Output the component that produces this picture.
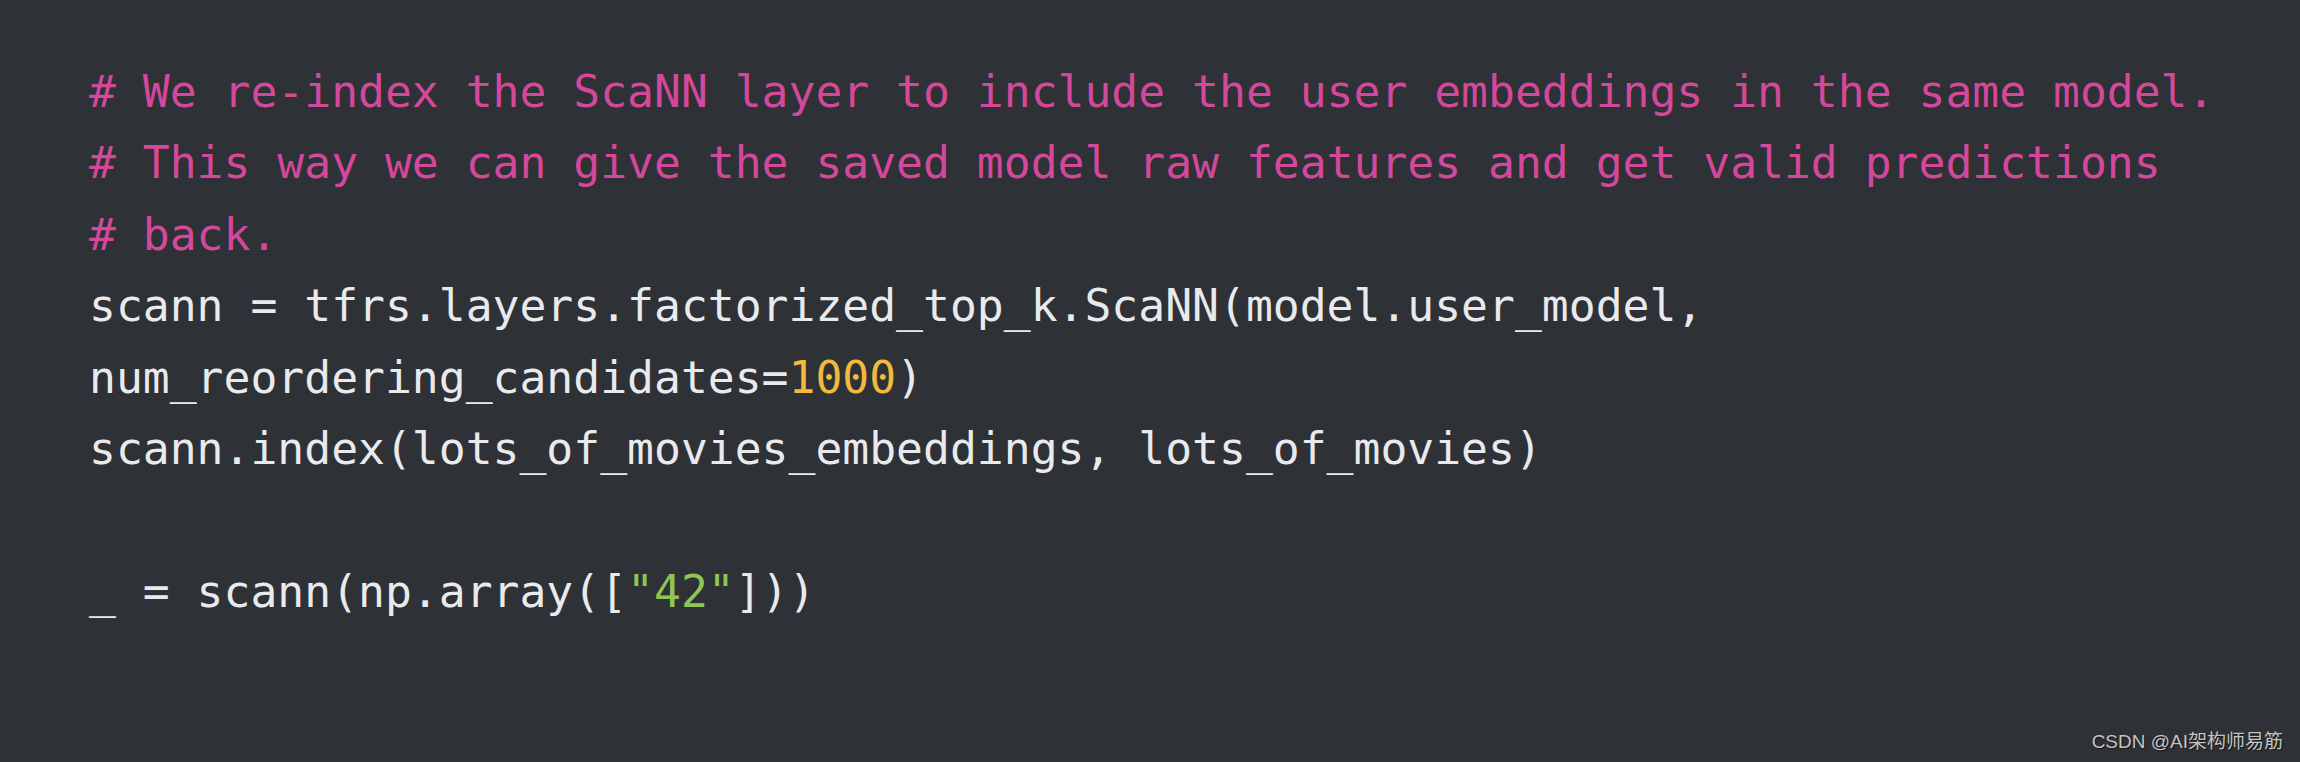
import React from "react";

const mono = { fontFamily: '"DejaVu Sans Mono", "Liberation Mono", monospace' };

type Seg = { t: string; c?: string };

const lines: Seg[][] = [
  [{ t: "# We re-index the ScaNN layer to include the user embeddings in the same model.", c: "text-[#d4489b]" }],
  [{ t: "# This way we can give the saved model raw features and get valid predictions", c: "text-[#d4489b]" }],
  [{ t: "# back.", c: "text-[#d4489b]" }],
  [{ t: "scann = tfrs.layers.factorized_top_k.ScaNN(model.user_model," }],
  [{ t: "num_reordering_candidates=" }, { t: "1000", c: "text-[#f1b93e]" }, { t: ")" }],
  [{ t: "scann.index(lots_of_movies_embeddings, lots_of_movies)" }],
  [{ t: " " }],
  [{ t: "_ = scann(np.array([" }, { t: '"42"', c: "text-[#8fc552]" }, { t: "]))" }],
];

export default function App() {
  return (
    <div className="relative h-[762px] w-full overflow-hidden bg-[#2e3135]">
      <div className="pl-[89px] pt-[57px] text-[44.7px] leading-[71.4px] text-[#e8eaed]" style={mono}>
        {lines.map((line, i) => (
          <div key={i} className="whitespace-pre">
            {line.map((s, j) => (
              <span key={j} className={s.c}>
                {s.t}
              </span>
            ))}
          </div>
        ))}
      </div>

      {/* watermark */}
      <div
        className="absolute bottom-[6px] right-[17px] text-[19px] text-[#c4c4c4] [text-shadow:1px_1px_1px_rgba(0,0,0,0.6)]"
        style={{ fontFamily: '"Liberation Sans", "Noto Sans CJK SC", sans-serif' }}
      >
        CSDN @AI架构师易筋
      </div>
    </div>
  );
}
